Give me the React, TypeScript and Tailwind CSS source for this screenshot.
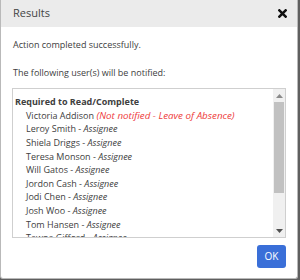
import React from "react";

const people: [string, string][] = [
  ["Leroy Smith", "Assignee"],
  ["Shiela Driggs", "Assignee"],
  ["Teresa Monson", "Assignee"],
  ["Will Gatos", "Assignee"],
  ["Jordon Cash", "Assignee"],
  ["Jodi Chen", "Assignee"],
  ["Josh Woo", "Assignee"],
  ["Tom Hansen", "Assignee"],
  ["Tawna Gifford", "Assignee"],
  ["Mark Allen", "Assignee"],
];

export default function App() {
  return (
    <div className="w-[300px] h-[280px] bg-[#5f5f5f] overflow-hidden" style={{ fontFamily: '"Open Sans", sans-serif' }}>
      <div className="w-[298px] h-[279px] bg-white border border-[#b9b9b9] border-t-0 rounded-b-[3px] flex flex-col">
        <div className="h-[27px] bg-[#ebebeb] flex items-center justify-between pl-[12px] pr-[10px]">
          <span className="text-[11px] text-[#444]">Results</span>
          <svg width="9" height="9" viewBox="0 0 10 10">
            <path d="M1.5 1.5 L8.5 8.5 M8.5 1.5 L1.5 8.5" stroke="#111" strokeWidth="2.8" strokeLinecap="square" />
          </svg>
        </div>
        <div className="flex flex-col px-[11px] text-[9px] text-[#404040] leading-[13.6px]">
          <div className="mt-[11px] pl-[1px]">Action completed successfully.</div>
          <div className="mt-[14px] pl-[1px]">The following user(s) will be notified:</div>
          <div className="mt-[9px] h-[150px] border border-[#cfcfcf] flex">
            <div className="flex-1 overflow-hidden pl-[2px] pt-[6px]">
              <div className="font-bold">Required to Read/Complete</div>
              <div className="pl-[11px] whitespace-nowrap">
                Victoria Addison <span className="italic text-[9.8px] text-[#ee3b3b]">(Not notified - Leave of Absence)</span>
              </div>
              {people.map(([n, r]) => (
                <div key={n} className="pl-[11px] whitespace-nowrap">
                  {n} - <span className="italic">{r}</span>
                </div>
              ))}
            </div>
            <div className="w-[12px] bg-[#f0f0f0] flex flex-col items-center">
              <div className="h-[13px] flex items-center justify-center">
                <svg width="7" height="4" viewBox="0 0 7 4"><path d="M3.5 0 L7 4 L0 4 Z" fill="#8a8a8a" /></svg>
              </div>
              <div className="w-[10px] h-[91px] bg-[#c1c1c1]" />
              <div className="flex-1" />
              <div className="h-[13px] flex items-center justify-center">
                <svg width="7" height="4" viewBox="0 0 7 4"><path d="M0 0 L7 0 L3.5 4 Z" fill="#505050" /></svg>
              </div>
            </div>
          </div>
          <div className="flex justify-end mt-[7px]">
            <button className="w-[29px] h-[23px] rounded-[3px] bg-[#3a6fd8] text-white text-[10px] flex items-center justify-center">OK</button>
          </div>
        </div>
      </div>
    </div>
  );
}
